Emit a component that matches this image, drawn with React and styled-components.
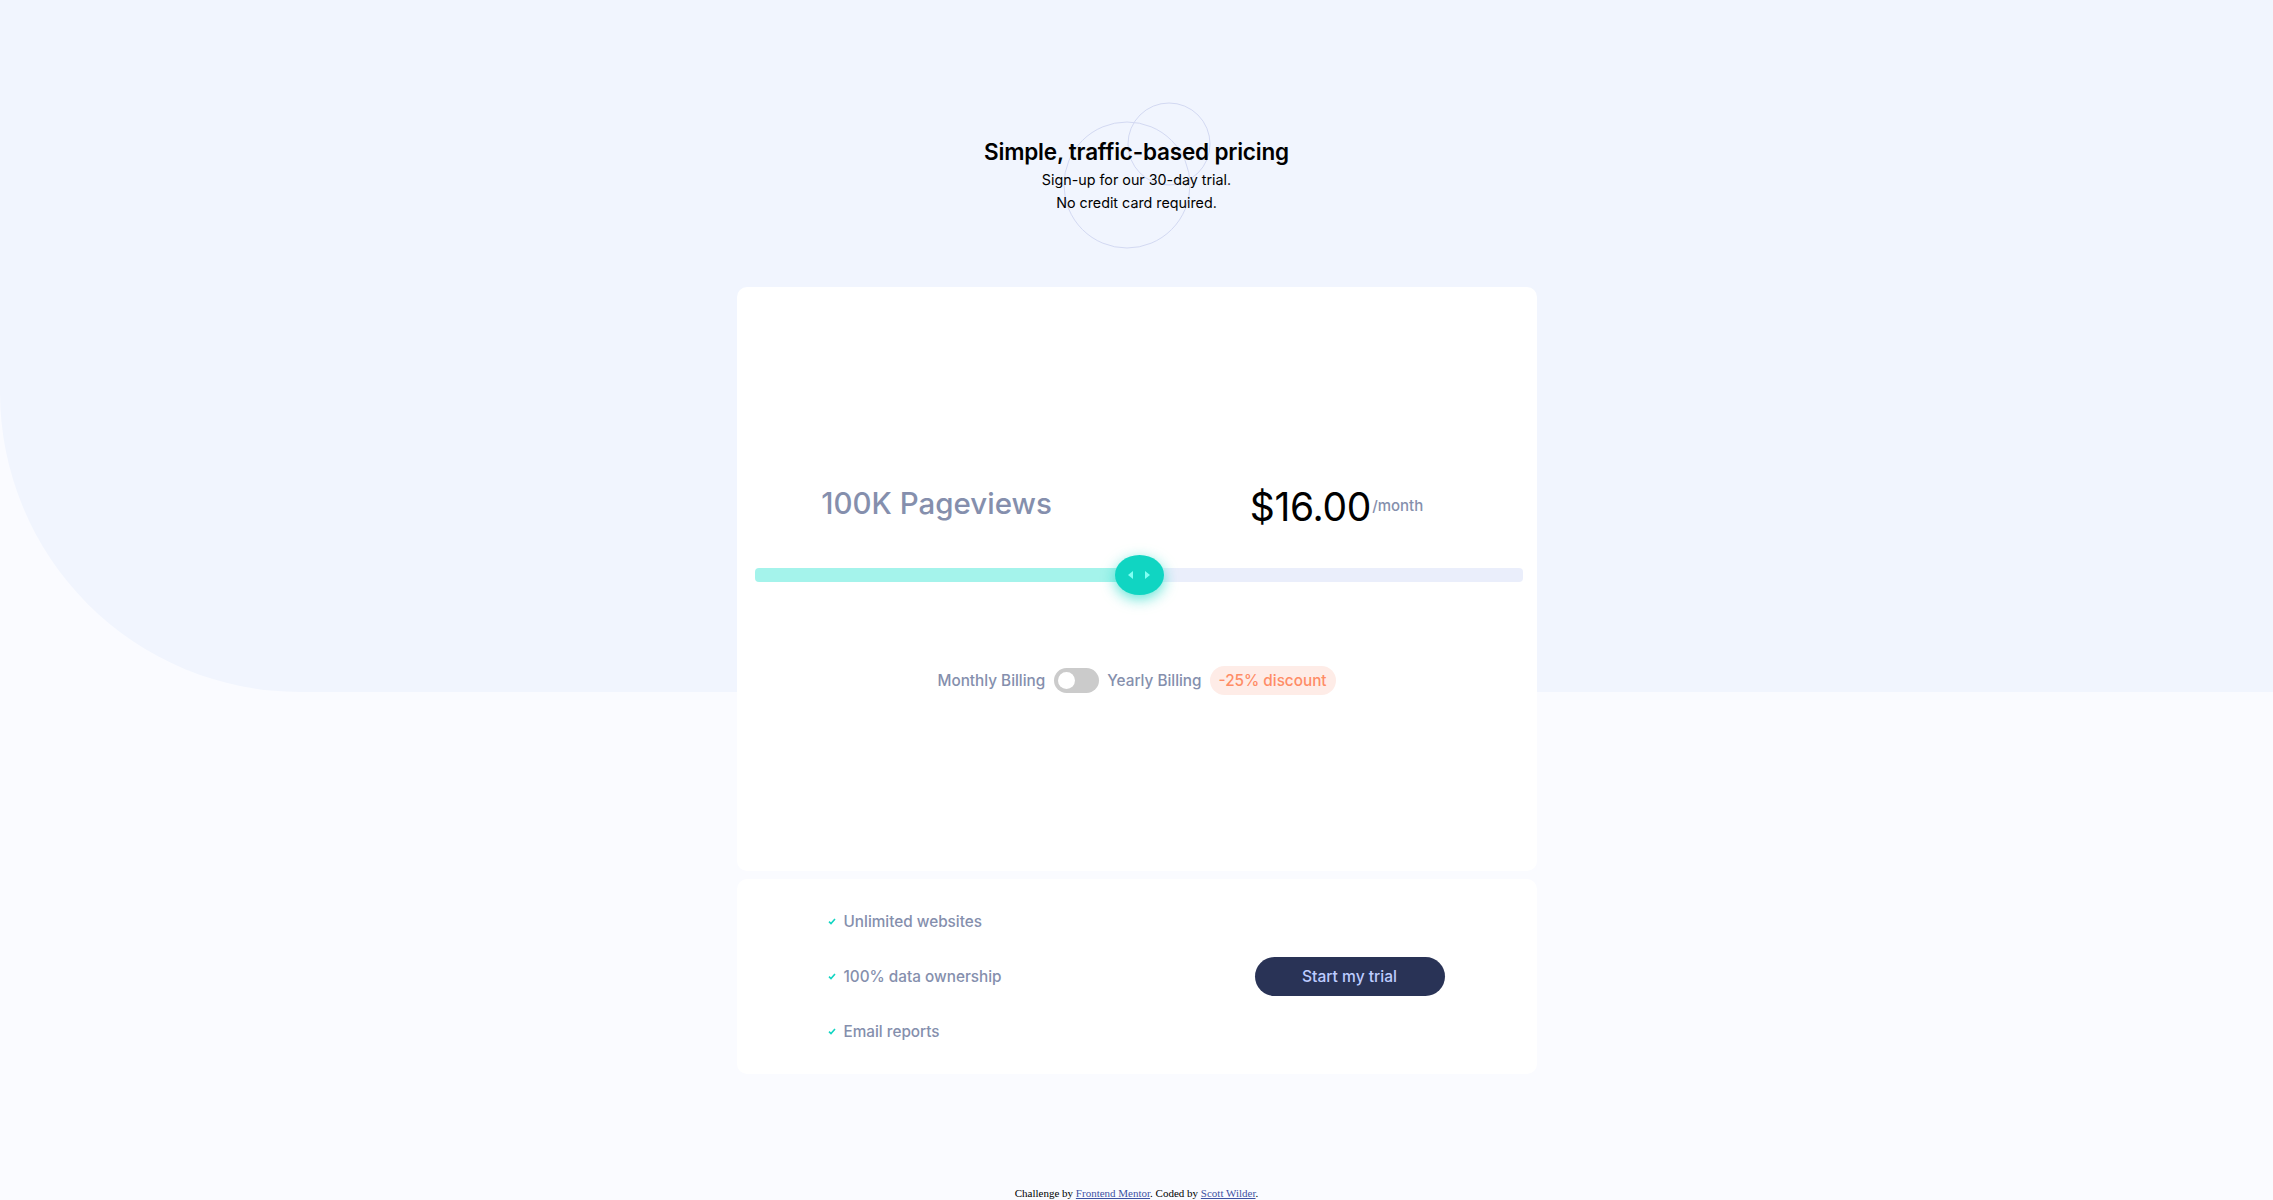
import React from 'react';
import styled, { createGlobalStyle } from 'styled-components';

const GlobalStyle = createGlobalStyle`
  html {
    overflow-y: scroll;
  }
  body {
    margin: 0;
    overflow-x: hidden;
    background-color: #fafbff;
    font-family: Inter, "Noto Sans", sans-serif;
  }
`

const Page = styled.div`
  position: relative;
  width: 100vw;
  min-height: 1218px;
  display: flex;
  flex-direction: column;
  align-items: center;
  background-color: #fafbff;
  &::before {
    content: '';
    position: absolute;
    top: 0;
    left: 0;
    width: 100%;
    height: 692px;
    background-color: #f1f5fe;
    border-bottom-left-radius: 300px;
  }
`

const Header = styled.header`
  position: relative;
  z-index: 1;
  padding-top: 136px;
  text-align: center;
  h1 {
    margin: 0;
    font-size: 22.5px;
    line-height: 32px;
    font-weight: 600;
    color: #000;
    letter-spacing: -0.2px;
  }
  p {
    margin: 0;
    font-size: 14.3px;
    line-height: 23px;
    color: #000;
  }
`

const Pattern = styled.svg`
  position: absolute;
  z-index: -1;
  left: 50%;
  top: 100px;
  margin-left: -75px;
  overflow: visible;
`

const Card = styled.section`
  position: relative;
  z-index: 1;
  box-sizing: border-box;
  width: 800px;
  height: 584px;
  margin-top: 73px;
  padding-top: 191px;
  display: flex;
  flex-direction: column;
  background-color: #fff;
  border-radius: 10px;
`

const PriceRow = styled.div`
  display: grid;
  grid-template-columns: 1fr 1fr;
  height: 50px;
  align-items: center;
  .views {
    text-align: center;
    font-size: 29.5px;
    font-weight: 500;
    color: #858fad;
    margin-top: -2px;
  }
  .price {
    display: flex;
    justify-content: center;
    align-items: flex-start;
  }
  .amount {
    font-size: 39px;
    line-height: 46px;
    font-weight: 400;
    letter-spacing: -0.3px;
    color: #000;
    margin-top: 6px;
  }
  .period {
    margin-top: 18px;
    margin-left: 1px;
    font-size: 15px;
    font-weight: 500;
    color: #858fad;
  }
`

const SliderWrap = styled.div`
  position: relative;
  height: 40px;
  margin: 27px 14px 0 18px;
  display: flex;
  align-items: center;
`

const Track = styled.div`
  width: 100%;
  height: 14px;
  border-radius: 4px;
  background: linear-gradient(to right, #a4f3eb 0%, #a4f3eb ${p => p.$value}%, #eaeefb ${p => p.$value}%, #eaeefb 100%);
`

const Thumb = styled.div`
  position: absolute;
  top: 0;
  width: 49px;
  height: 40px;
  margin-left: -24px;
  border-radius: 50%;
  background-color: #10d5c2;
  box-shadow: 0 4px 14px rgba(16, 213, 194, 0.65);
  display: flex;
  align-items: center;
  justify-content: center;
`

const BillingRow = styled.div`
  display: flex;
  justify-content: center;
  align-items: center;
  margin-top: 71px;
  height: 29px;
  font-size: 15.3px;
  font-weight: 500;
  color: #858fad;
`

const Toggle = styled.div`
  position: relative;
  width: 45px;
  height: 25px;
  margin: 0 8px 0 9px;
  border-radius: 13px;
  background-color: #cbcbcb;
  &::after {
    content: '';
    position: absolute;
    top: 4px;
    left: ${p => (p.$on ? '24px' : '4px')};
    width: 17px;
    height: 17px;
    border-radius: 50%;
    background-color: #fff;
  }
`

const Discount = styled.span`
  margin-left: 8px;
  padding: 0 9px;
  height: 29px;
  line-height: 29px;
  border-radius: 15px;
  background-color: #feece7;
  color: #ff8c66;
  font-weight: 500;
`

const FeatureCard = styled.section`
  position: relative;
  z-index: 1;
  box-sizing: border-box;
  width: 800px;
  height: 195px;
  margin-top: 8px;
  padding: 0 92px 0 91px;
  display: flex;
  justify-content: space-between;
  align-items: center;
  background-color: #fff;
  border-radius: 10px;
`

const Features = styled.ul`
  list-style: none;
  margin: 0;
  padding: 0;
  display: flex;
  flex-direction: column;
  gap: 35px;
  li {
    display: flex;
    align-items: center;
    gap: 8px;
    height: 20px;
    font-size: 15.3px;
    font-weight: 500;
    color: #858fad;
  }
`

const TrialButton = styled.button`
  width: 190px;
  height: 39px;
  border: none;
  border-radius: 20px;
  background-color: #293356;
  color: #bdccff;
  font-family: inherit;
  font-size: 15.6px;
  font-weight: 500;
  cursor: pointer;
`

const Footer = styled.footer`
  position: relative;
  z-index: 1;
  margin-top: 113px;
  font-family: "Liberation Serif", serif;
  font-size: 11px;
  line-height: 13px;
  color: #000;
  a {
    color: #3e52a3;
  }
`

const Check = () => (
  <svg width="8" height="7" viewBox="0 0 8 7">
    <path d="M1 3.6 L3 5.5 L7 1" fill="none" stroke="#10d5c2" strokeWidth="1.6" />
  </svg>
)

const Arrows = () => (
  <svg width="22" height="8" viewBox="0 0 22 8">
    <path d="M5 0 L0 4 L5 8 Z" fill="#80fff3" />
    <path d="M17 0 L22 4 L17 8 Z" fill="#80fff3" />
  </svg>
)

export default function App() {
  const value = 50;
  return (
    <Page>
      <GlobalStyle />
      <Header>
        <Pattern width="150" height="150" viewBox="0 0 150 150">
          <circle cx="66" cy="85" r="63" fill="none" stroke="#d3d9f2" strokeWidth="1" />
          <circle cx="108" cy="44" r="41" fill="none" stroke="#d3d9f2" strokeWidth="1" />
        </Pattern>
        <h1>Simple, traffic-based pricing</h1>
        <p>Sign-up for our 30-day trial.<br />No credit card required.</p>
      </Header>

      <Card>
        <PriceRow>
          <div className='views'>100K Pageviews</div>
          <div className='price'>
            <span className='amount'>$16.00</span>
            <span className='period'>/month</span>
          </div>
        </PriceRow>
        <SliderWrap>
          <Track $value={value} />
          <Thumb style={{ left: `${value}%` }}>
            <Arrows />
          </Thumb>
        </SliderWrap>
        <BillingRow>
          <span>Monthly Billing</span>
          <Toggle $on={false} />
          <span>Yearly Billing</span>
          <Discount>-25% discount</Discount>
        </BillingRow>
      </Card>

      <FeatureCard>
        <Features>
          <li><Check />Unlimited websites</li>
          <li><Check />100% data ownership</li>
          <li><Check />Email reports</li>
        </Features>
        <TrialButton>Start my trial</TrialButton>
      </FeatureCard>

      <Footer>
        Challenge by <a href="#">Frontend Mentor</a>. Coded by <a href="#">Scott Wilder</a>.
      </Footer>
    </Page>
  )
}
